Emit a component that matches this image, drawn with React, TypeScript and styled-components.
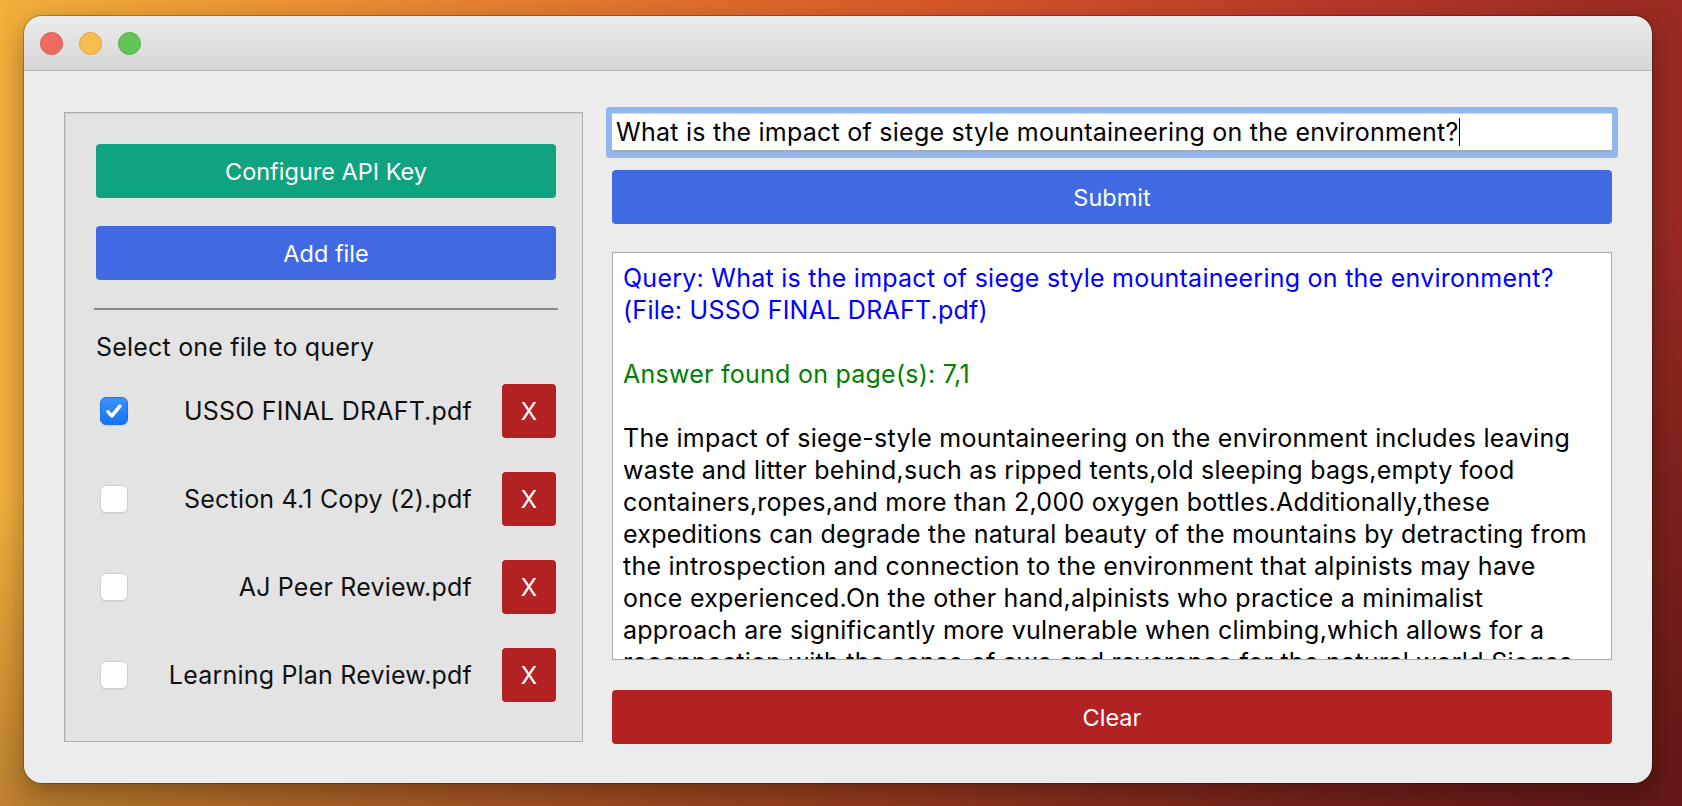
import React from 'react'
import styled, {createGlobalStyle} from 'styled-components'

const GlobalStyle = createGlobalStyle`
  html, body {
    margin: 0;
    padding: 0;
  }
  body {
    width: 1682px;
    height: 806px;
    overflow: hidden;
    font-family: Inter, "Liberation Sans", Arial, sans-serif;
    background:
      linear-gradient(170deg, rgba(0, 0, 0, 0) 45%, rgba(50, 8, 12, 0.55) 100%),
      linear-gradient(90deg, #f3b03c 0%, #e98230 28%, #d95a2a 55%, #b8382a 80%, #9a2a22 100%);
  }
`

const Desktop = styled.div`
  box-sizing: border-box;
  height: 806px;
  padding: 16px 0 0 24px;
`

const Window = styled.div`
  width: 1628px;
  height: 767px;
  border-radius: 18px;
  overflow: hidden;
  display: flex;
  flex-direction: column;
  box-shadow: 0 0 0 1px rgba(0, 0, 0, 0.25), 0 10px 30px rgba(0, 0, 0, 0.35);
`

const TitleBar = styled.div`
  height: 54px;
  flex: none;
  display: flex;
  align-items: center;
  gap: 16px;
  padding-left: 16px;
  background: linear-gradient(#ececec, #d6d6d6);
  border-bottom: 1px solid #b5b5b5;
`

const Light = styled.span<{$fill: string; $edge: string}>`
  width: 23px;
  height: 23px;
  border-radius: 50%;
  box-sizing: border-box;
  background: ${p => p.$fill};
  border: 1px solid ${p => p.$edge};
`

const Content = styled.div`
  flex: 1;
  display: flex;
  gap: 29px;
  padding: 35px 40px 39px 40px;
  background: #ececec;
`

const Panel = styled.div`
  box-sizing: border-box;
  width: 519px;
  height: 630px;
  margin-top: 6px;
  border: 1px solid #aeaeae;
  background: #e3e3e3;
  padding: 31px 26px 0 31px;
  box-shadow: inset 1px 1px 0 #d2d2d2;
`

const Button = styled.div<{$color: string}>`
  height: 54px;
  border-radius: 4px;
  background: ${p => p.$color};
  color: #fff;
  font-size: 23.5px;
  display: flex;
  align-items: center;
  justify-content: center;
`

const PanelButton = styled(Button)`
  width: 460px;
  margin-bottom: 28px;
`

const SubmitButton = styled(Button)`
  margin-top: 18px;
`

const ClearButton = styled(Button)`
  margin-top: 30px;
`

const Separator = styled.div`
  width: 464px;
  height: 2px;
  margin-left: -2px;
  background: #8a8a8a;
`

const Heading = styled.div`
  margin-top: 22px;
  height: 30px;
  line-height: 30px;
  font-size: 25px;
  letter-spacing: 0.2px;
  color: #111;
`

const FileList = styled.div`
  margin-top: 22px;
  display: flex;
  flex-direction: column;
  gap: 34px;
  width: 460px;
`

const FileRow = styled.div`
  display: flex;
  align-items: center;
  height: 54px;
`

const Check = styled.span<{$on?: boolean}>`
  box-sizing: border-box;
  width: 28px;
  height: 28px;
  margin-left: 4px;
  border-radius: 6px;
  display: flex;
  align-items: center;
  justify-content: center;
  background: ${p => (p.$on ? 'linear-gradient(#3b93ff, #1473f5)' : '#fff')};
  border: 1px solid ${p => (p.$on ? '#1a74ee' : '#cfcfcf')};
  box-shadow: 0 1px 1px rgba(0, 0, 0, 0.08);
`

const FileName = styled.span`
  flex: 1;
  text-align: right;
  padding-right: 30px;
  font-size: 25px;
  letter-spacing: 0.2px;
  color: #111;
  white-space: nowrap;
`

const RemoveButton = styled(Button)`
  width: 54px;
  font-size: 24px;
`

const Right = styled.div`
  width: 1000px;
  display: flex;
  flex-direction: column;
`

const QueryField = styled.div`
  box-sizing: border-box;
  height: 39px;
  margin-top: 7px;
  background: #fff;
  border-bottom: 2px solid #a9a9a9;
  border-top: 1px solid #d8d8d8;
  box-shadow: 0 0 0 6px #92b7ee;
  border-radius: 1px;
  display: flex;
  align-items: center;
  padding-left: 4px;
  font-size: 25px;
  letter-spacing: 0.25px;
  color: #000;
  white-space: nowrap;
`

const Caret = styled.span`
  display: inline-block;
  width: 1px;
  height: 28px;
  background: #000;
  margin-left: 1px;
`

const Output = styled.div`
  box-sizing: border-box;
  height: 408px;
  margin-top: 28px;
  border: 1px solid #aaaaaa;
  background: #fff;
  padding: 9px 10px 0;
  overflow: hidden;
`

const Line = styled.div<{$tone?: 'query' | 'answer'}>`
  height: 32px;
  line-height: 32px;
  font-size: 25px;
  letter-spacing: 0.25px;
  white-space: nowrap;
  color: ${p => (p.$tone === 'query' ? '#0000ff' : p.$tone === 'answer' ? '#008000' : '#000')};
`

const files = [
  {name: 'USSO FINAL DRAFT.pdf', on: true},
  {name: 'Section 4.1 Copy (2).pdf', on: false},
  {name: 'AJ Peer Review.pdf', on: false},
  {name: 'Learning Plan Review.pdf', on: false},
]

const answer = [
  'The impact of siege-style mountaineering on the environment includes leaving',
  'waste and litter behind,such as ripped tents,old sleeping bags,empty food',
  'containers,ropes,and more than 2,000 oxygen bottles.Additionally,these',
  'expeditions can degrade the natural beauty of the mountains by detracting from',
  'the introspection and connection to the environment that alpinists may have',
  'once experienced.On the other hand,alpinists who practice a minimalist',
  'approach are significantly more vulnerable when climbing,which allows for a',
  'reconnection with the sense of awe and reverence for the natural world.Sieges',
]

export default function App() {
  return (
    <>
      <GlobalStyle />
      <Desktop>
        <Window>
          <TitleBar>
            <Light $fill="#ee6b60" $edge="#d65a50" />
            <Light $fill="#f6be50" $edge="#dca441" />
            <Light $fill="#62c655" $edge="#50ad44" />
          </TitleBar>
          <Content>
            <Panel>
              <PanelButton $color="#10a37f">Configure API Key</PanelButton>
              <PanelButton $color="#4169e1">Add file</PanelButton>
              <Separator />
              <Heading>Select one file to query</Heading>
              <FileList>
                {files.map(f => (
                  <FileRow key={f.name}>
                    <Check $on={f.on}>
                      {f.on && (
                        <svg width="22" height="22" viewBox="0 0 20 20">
                          <path d="M4.5 10.8l3.6 3.7 7.2-9" fill="none" stroke="#fff" strokeWidth="3.2"
                                strokeLinecap="round" strokeLinejoin="round" />
                        </svg>
                      )}
                    </Check>
                    <FileName>{f.name}</FileName>
                    <RemoveButton $color="#b22222">X</RemoveButton>
                  </FileRow>
                ))}
              </FileList>
            </Panel>
            <Right>
              <QueryField>
                What is the impact of siege style mountaineering on the environment?<Caret />
              </QueryField>
              <SubmitButton $color="#4169e1">Submit</SubmitButton>
              <Output>
                <Line $tone="query">Query: What is the impact of siege style mountaineering on the environment?</Line>
                <Line $tone="query">(File: USSO FINAL DRAFT.pdf)</Line>
                <Line />
                <Line $tone="answer">Answer found on page(s): 7,1</Line>
                <Line />
                {answer.map(t => <Line key={t}>{t}</Line>)}
              </Output>
              <ClearButton $color="#b22222">Clear</ClearButton>
            </Right>
          </Content>
        </Window>
      </Desktop>
    </>
  )
}
